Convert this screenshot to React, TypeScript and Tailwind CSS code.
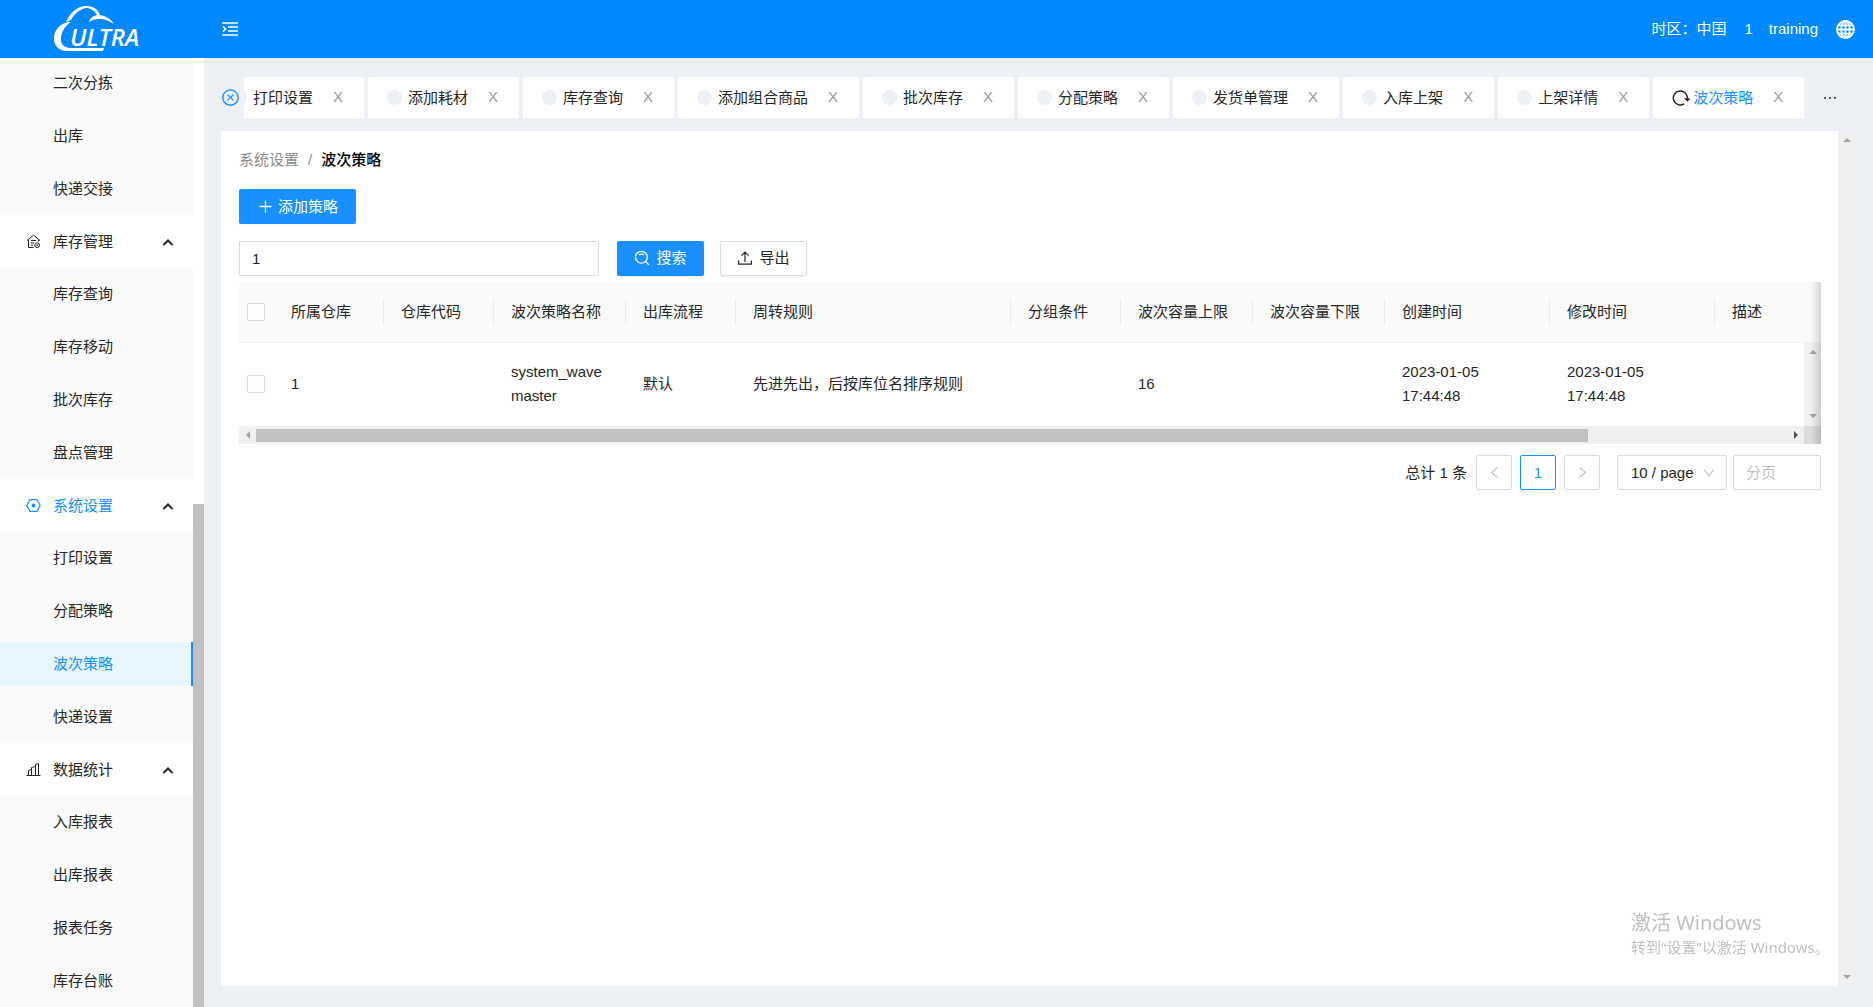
import React, { useState } from 'react';
import {
  AiOutlineCloseCircle,
  AiOutlineDown,
  AiOutlineEllipsis,
  AiOutlineLeft,
  AiOutlinePlus,
  AiOutlineRight,
} from 'react-icons/ai';

interface MenuGroup {
  title: string;
  icon: React.ReactNode;
  items: string[];
}

const WarehouseIcon = () => (
  <svg viewBox="0 0 15 15" className="h-[15px] w-[15px]" fill="none" stroke="currentColor" strokeWidth="1">
    <path d="M1 6.5 7.5 1.2 14 6.5M2.5 5.6V13.5H7.5M12.5 5.6V7.5M5 6.5H10M5 9H8M5 11.2H7" />
    <circle cx="11.2" cy="11.2" r="2.4" />
    <circle cx="11.2" cy="11.2" r="0.6" />
  </svg>
);

const SettingIcon = () => (
  <svg viewBox="0 0 15 15" className="h-[15px] w-[15px]" fill="none" stroke="currentColor" strokeWidth="1.3">
    <path d="M4 1.7H11L14.2 7.5 11 13.3H4L0.8 7.5Z" strokeLinejoin="round" />
    <circle cx="7.5" cy="7.5" r="1.9" fill="currentColor" stroke="none" />
  </svg>
);

const ChartIcon = () => (
  <svg viewBox="0 0 15 15" className="h-[15px] w-[15px]" fill="none" stroke="currentColor" strokeWidth="1">
    <path d="M0.5 13.5H14.5M2.5 13.5V8.5L5.5 7.5V13.5M5.5 13.5V5.5L9.5 4.5V13.5M9.5 13.5V2.5L12.5 1.5V13.5" />
  </svg>
);

const MenuUnfoldIcon = () => (
  <svg viewBox="0 0 16 14" className="h-[14px] w-4" fill="none" stroke="currentColor" strokeWidth="1.6">
    <path d="M0 1H16M6 5H16M6 9H16M0 13H16M0.8 4.2 3.6 7 0.8 9.8" />
  </svg>
);

const SearchIcon = () => (
  <svg viewBox="0 0 16 16" className="h-4 w-4" fill="none" stroke="currentColor" strokeWidth="1.3">
    <circle cx="7.4" cy="7.2" r="5.9" />
    <path d="M11.6 11.6 14.8 14.8M4.9 5.2C6 3.7 8.8 3.7 9.9 5.2" />
  </svg>
);

const ExportIcon = () => (
  <svg viewBox="0 0 16 16" className="h-4 w-4" fill="none" stroke="currentColor" strokeWidth="1.2">
    <path d="M8 12V2.2M4.4 5.6 8 2 11.6 5.6M1.6 10.5V14.2H14.4V10.5" />
  </svg>
);

const RefreshIcon = () => (
  <svg viewBox="0 0 18 16" className="h-4 w-[18px]" fill="none" stroke="currentColor" strokeWidth="1.5">
    <path d="M12 14A7 7 0 1 1 15.3 9" />
    <path d="M12 8.2H18.4L15.4 11.8Z" fill="currentColor" stroke="none" />
  </svg>
);

const GlobeIcon = () => (
  <svg viewBox="0 0 19 19" className="h-[19px] w-[19px]" fill="none" stroke="currentColor" strokeWidth="1.8">
    <circle cx="9.5" cy="9.5" r="8.5" />
    <ellipse cx="9.5" cy="9.5" rx="4.2" ry="8.5" />
    <path d="M9.5 1V18M1 9.5H18M2.4 5.3H16.6M2.4 13.7H16.6" />
  </svg>
);

const Logo = () => (
  <svg viewBox="0 0 100 48" className="h-12 w-[100px]" role="img" aria-label="ULTRA">
    <path d="M13 17C17 8 24 1 33 1C40 1 45 4 47 10C53 11 58 14 61 19C55 15 50 14 46 14C42 14 39 15 36 17C37 13 40 11 44 10C41 5 37 3 33 3C27 4 21 9 18 15Z" fill="#fff" />
    <path d="M18 17C8 17 2 24 1 32C0 40 6 46 14 46H50L51 43H18C11 43 7 39 8 32C9 26 12 21 18 17Z" fill="#fff" />
    <text x="17" y="41" fontFamily="Open Sans, sans-serif" fontSize="24" fontStyle="italic" fontWeight="600" fill="#fff">ULTRA</text>
  </svg>
);

const menuGroups: MenuGroup[] = [
  { title: '库存管理', icon: <WarehouseIcon />, items: ['库存查询', '库存移动', '批次库存', '盘点管理'] },
  { title: '系统设置', icon: <SettingIcon />, items: ['打印设置', '分配策略', '波次策略', '快递设置'] },
  { title: '数据统计', icon: <ChartIcon />, items: ['入库报表', '出库报表', '报表任务', '库存台账'] },
];

const tabs = ['打印设置', '添加耗材', '库存查询', '添加组合商品', '批次库存', '分配策略', '发货单管理', '入库上架', '上架详情', '波次策略'];

const columns = [
  { title: '所属仓库', width: 'w-[110px]' },
  { title: '仓库代码', width: 'w-[110px]' },
  { title: '波次策略名称', width: 'w-[132px]' },
  { title: '出库流程', width: 'w-[110px]' },
  { title: '周转规则', width: 'w-[275px]' },
  { title: '分组条件', width: 'w-[110px]' },
  { title: '波次容量上限', width: 'w-[132px]' },
  { title: '波次容量下限', width: 'w-[132px]' },
  { title: '创建时间', width: 'w-[165px]' },
  { title: '修改时间', width: 'w-[165px]' },
  { title: '描述', width: '' },
];

const rows = [
  ['1', '', 'system_wave master', '默认', '先进先出，后按库位名排序规则', '', '16', '', '2023-01-05 17:44:48', '2023-01-05 17:44:48', ''],
];

const checkboxClass = 'block h-[18px] w-[18px] appearance-none rounded-xs border border-[#d9d9d9] bg-white checked:bg-[#1890ff]';
const pageButtonClass = 'flex h-[35px] w-9 items-center justify-center rounded-xs border bg-white';

function Header() {
  return (
    <header className="flex h-[58px] shrink-0 items-center bg-[#0088ff] text-white">
      <div className="flex w-[204px] shrink-0 pl-[53px]">
        <Logo />
      </div>
      <button type="button" aria-label="折叠菜单" className="ml-[18px]">
        <MenuUnfoldIcon />
      </button>
      <div className="ml-auto flex items-center pr-[18px]">
        <span>时区：中国</span>
        <span className="ml-[18px]">1</span>
        <span className="ml-4">training</span>
        <button type="button" aria-label="语言" className="ml-[18px]">
          <GlobeIcon />
        </button>
      </div>
    </header>
  );
}

function MenuLink({ label, active, onSelect }: { label: string; active: boolean; onSelect: (label: string) => void }) {
  return (
    <a
      href="#"
      onClick={() => onSelect(label)}
      className={`flex h-11 items-center pl-[53px] ${active ? 'border-r-2 border-[#1890ff] bg-[#e6f7ff] text-[#1890ff]' : ''}`}
    >
      {label}
    </a>
  );
}

function Sidebar() {
  const [active, setActive] = useState('波次策略');

  return (
    <aside className="flex w-[204px] shrink-0 overflow-hidden bg-white">
      <nav className="min-w-0 flex-1">
        <div className="flex flex-col gap-[9px] bg-[#fafafa] pt-[3px] pb-1">
          {['二次分拣', '出库', '快递交接'].map(item => (
            <MenuLink key={item} label={item} active={item === active} onSelect={setActive} />
          ))}
        </div>
        {menuGroups.map(group => (
          <div key={group.title}>
            <button
              type="button"
              className={`flex h-[53px] w-full items-center pr-[19px] pl-[26px] ${group.items.includes(active) ? 'text-[#1890ff]' : ''}`}
            >
              {group.icon}
              <span className="ml-3">{group.title}</span>
              <svg viewBox="0 0 12 8" className="ml-auto h-2 w-3 text-[#262626]" fill="none" stroke="currentColor" strokeWidth="2">
                <path d="M1.5 7 6 2.5 10.5 7" />
              </svg>
            </button>
            <div className="flex flex-col gap-[9px] bg-[#fafafa] py-1">
              {group.items.map(item => (
                <MenuLink key={item} label={item} active={item === active} onSelect={setActive} />
              ))}
            </div>
          </div>
        ))}
      </nav>
      {/* Scrollbar */}
      <div className="flex w-[11px] flex-col justify-end bg-white">
        <div className="h-[53%] bg-[#c1c1c1]" />
      </div>
    </aside>
  );
}

function TabBar() {
  const activeTab = '波次策略';

  return (
    <div className="flex items-center">
      <button type="button" aria-label="关闭全部" className="mr-1 text-[#1890ff]">
        <AiOutlineCloseCircle className="h-[19px] w-[19px]" />
      </button>
      <div className="flex min-w-0 overflow-hidden">
        <div className="-ml-[31px] flex gap-1">
          {tabs.map(tab => (
            <div key={tab} className="flex h-[41px] shrink-0 items-center rounded-t-xs bg-white pr-[21px] pl-[19px]">
              <span className="flex w-[21px] shrink-0">
                {tab === activeTab ? (
                  <RefreshIcon />
                ) : (
                  <span className="h-[15px] w-[15px] rounded-full bg-[#ecf0f5]" />
                )}
              </span>
              <a href="#" className={tab === activeTab ? 'text-[#1890ff]' : ''}>{tab}</a>
              <button type="button" aria-label={`关闭${tab}`} className="ml-5 w-[10px] pb-0.5 text-[#999]">X</button>
            </div>
          ))}
        </div>
      </div>
      <button type="button" aria-label="更多" className="ml-[17px]">
        <AiOutlineEllipsis className="h-[18px] w-[18px]" />
      </button>
    </div>
  );
}

function StrategyTable() {
  return (
    <div className="relative overflow-hidden">
      <table className="w-full table-fixed text-left">
        <thead>
          <tr className="h-[60px] border-b border-[#f0f0f0] bg-[#fafafa]">
            <th className="w-[35px] pl-2">
              <input type="checkbox" aria-label="全选" className={checkboxClass} />
            </th>
            {columns.map((col, i) => (
              <th key={col.title} className={`font-normal ${col.width}`}>
                <div className={`flex h-6 items-center pl-[17px] whitespace-nowrap ${i < columns.length - 1 ? 'border-r border-[#ebebeb]' : ''}`}>
                  {col.title}
                </div>
              </th>
            ))}
          </tr>
        </thead>
        <tbody>
          {rows.map(row => (
            <tr key={row[0]} className="h-[84px]">
              <td className="pl-2">
                <input type="checkbox" aria-label="选择" className={checkboxClass} />
              </td>
              {row.map((cell, i) => (
                <td key={i} className={i > 7 ? 'pr-16 pl-[17px]' : 'px-[17px]'}>{cell}</td>
              ))}
            </tr>
          ))}
        </tbody>
      </table>

      {/* Horizontal scrollbar */}
      <div className="flex h-[18px] items-center bg-[#f0f0f0]">
        <div className="flex w-[17px] justify-center">
          <svg viewBox="0 0 4 8" className="h-2 w-1"><path d="M4 0V8L0 4Z" fill="#a3a3a3" /></svg>
        </div>
        <div className="flex flex-1">
          <div className="h-[13px] w-[87%] bg-[#c1c1c1]" />
        </div>
        <div className="flex w-[17px] justify-center">
          <svg viewBox="0 0 4 8" className="h-2 w-1"><path d="M0 0V8L4 4Z" fill="#505050" /></svg>
        </div>
        <div className="h-full w-[17px] bg-[#dcdcdc]" />
      </div>

      {/* Vertical scrollbar over the body */}
      <div className="absolute top-[60px] right-0 bottom-[18px] flex w-[17px] flex-col items-center justify-between bg-[#f0f0f0] py-2">
        <svg viewBox="0 0 8 4" className="h-1 w-2"><path d="M0 4H8L4 0Z" fill="#a3a3a3" /></svg>
        <svg viewBox="0 0 8 4" className="h-1 w-2"><path d="M0 0H8L4 4Z" fill="#a3a3a3" /></svg>
      </div>
      <div className="pointer-events-none absolute inset-y-0 right-0 w-[10px] bg-linear-to-r from-transparent to-black/15" />
    </div>
  );
}

function Pagination() {
  return (
    <div className="mt-[11px] flex items-center justify-end">
      <span className="mr-[9px]">总计 1 条</span>
      <button type="button" aria-label="上一页" disabled className={`${pageButtonClass} border-[#d9d9d9] text-[#bfbfbf]`}>
        <AiOutlineLeft className="h-[15px] w-[15px]" />
      </button>
      <button type="button" className={`${pageButtonClass} ml-2 border-[#1890ff] text-[#1890ff]`}>1</button>
      <button type="button" aria-label="下一页" disabled className={`${pageButtonClass} ml-2 border-[#d9d9d9] text-[#bfbfbf]`}>
        <AiOutlineRight className="h-[15px] w-[15px]" />
      </button>
      <div className="relative ml-[17px]">
        <select aria-label="每页条数" className="h-[35px] w-[110px] appearance-none rounded-xs border border-[#d9d9d9] bg-white pl-[13px]">
          <option>10 / page</option>
        </select>
        <AiOutlineDown className="pointer-events-none absolute top-[11px] right-[11px] h-[14px] w-[14px] text-[#bfbfbf]" />
      </div>
      <input
        type="text"
        aria-label="分页"
        placeholder="分页"
        className="ml-1.5 h-[35px] w-[88px] rounded-xs border border-[#d9d9d9] px-3 placeholder:text-[#bfbfbf]"
      />
    </div>
  );
}

function StrategyPage() {
  const [keyword, setKeyword] = useState('1');

  return (
    <main className="min-w-0 flex-1 bg-white pt-[17px] pr-[17px] pl-[18px]">
      <div className="flex h-6 items-center">
        <a href="#" className="text-[#8c8c8c]">系统设置</a>
        <span className="mx-[9px] text-[#8c8c8c]">/</span>
        <span className="font-medium text-black">波次策略</span>
      </div>

      <button type="button" className="mt-[17px] flex h-[35px] w-[117px] items-center justify-center gap-1 rounded-xs bg-[#1890ff] text-white shadow-xs">
        <AiOutlinePlus className="h-[17px] w-[17px]" />
        添加策略
      </button>

      <div className="mt-[17px] mb-1.5 flex">
        <input
          type="text"
          aria-label="关键字"
          value={keyword}
          onChange={e => setKeyword(e.target.value)}
          className="h-[35px] w-[360px] rounded-xs border border-[#d9d9d9] px-3"
        />
        <button type="button" className="ml-[18px] flex h-[35px] w-[87px] items-center justify-center gap-1.5 rounded-xs bg-[#1890ff] pb-0.5 text-white shadow-xs">
          <SearchIcon />
          搜索
        </button>
        <button type="button" className="ml-4 flex h-[35px] w-[87px] items-center justify-center gap-1.5 rounded-xs border border-[#d9d9d9] pb-0.5 shadow-xs">
          <ExportIcon />
          导出
        </button>
      </div>

      <StrategyTable />
      <Pagination />
    </main>
  );
}

function App() {
  return (
    <div className="flex h-screen flex-col overflow-hidden bg-[#ecf0f5] font-['Liberation_Sans','Noto_Sans_CJK_SC',sans-serif] text-[15px] leading-6 text-[#262626]">
      <Header />
      <div className="flex min-h-0 flex-1">
        <Sidebar />
        <div className="flex min-w-0 flex-1 flex-col gap-[13px] pt-[19px] pr-[18px] pb-[21px] pl-[17px]">
          <TabBar />
          <div className="flex min-h-0 flex-1">
            <StrategyPage />
            <div className="flex w-[17px] flex-col items-center justify-between bg-[#f0f0f0] py-[7px]">
              <svg viewBox="0 0 8 4" className="h-1 w-2"><path d="M0 4H8L4 0Z" fill="#a3a3a3" /></svg>
              <svg viewBox="0 0 8 4" className="h-1 w-2"><path d="M0 0H8L4 4Z" fill="#a3a3a3" /></svg>
            </div>
          </div>
        </div>
      </div>

      {/* System activation notice */}
      <div className="pointer-events-none fixed right-[46px] bottom-12 w-[196px] font-['Noto_Sans','Noto_Sans_CJK_SC',sans-serif] whitespace-nowrap text-[#bfbfbf]">
        <p className="text-xl leading-6">激活 Windows</p>
        <p>转到“设置”以激活 Windows。</p>
      </div>
    </div>
  );
}

export default App;
